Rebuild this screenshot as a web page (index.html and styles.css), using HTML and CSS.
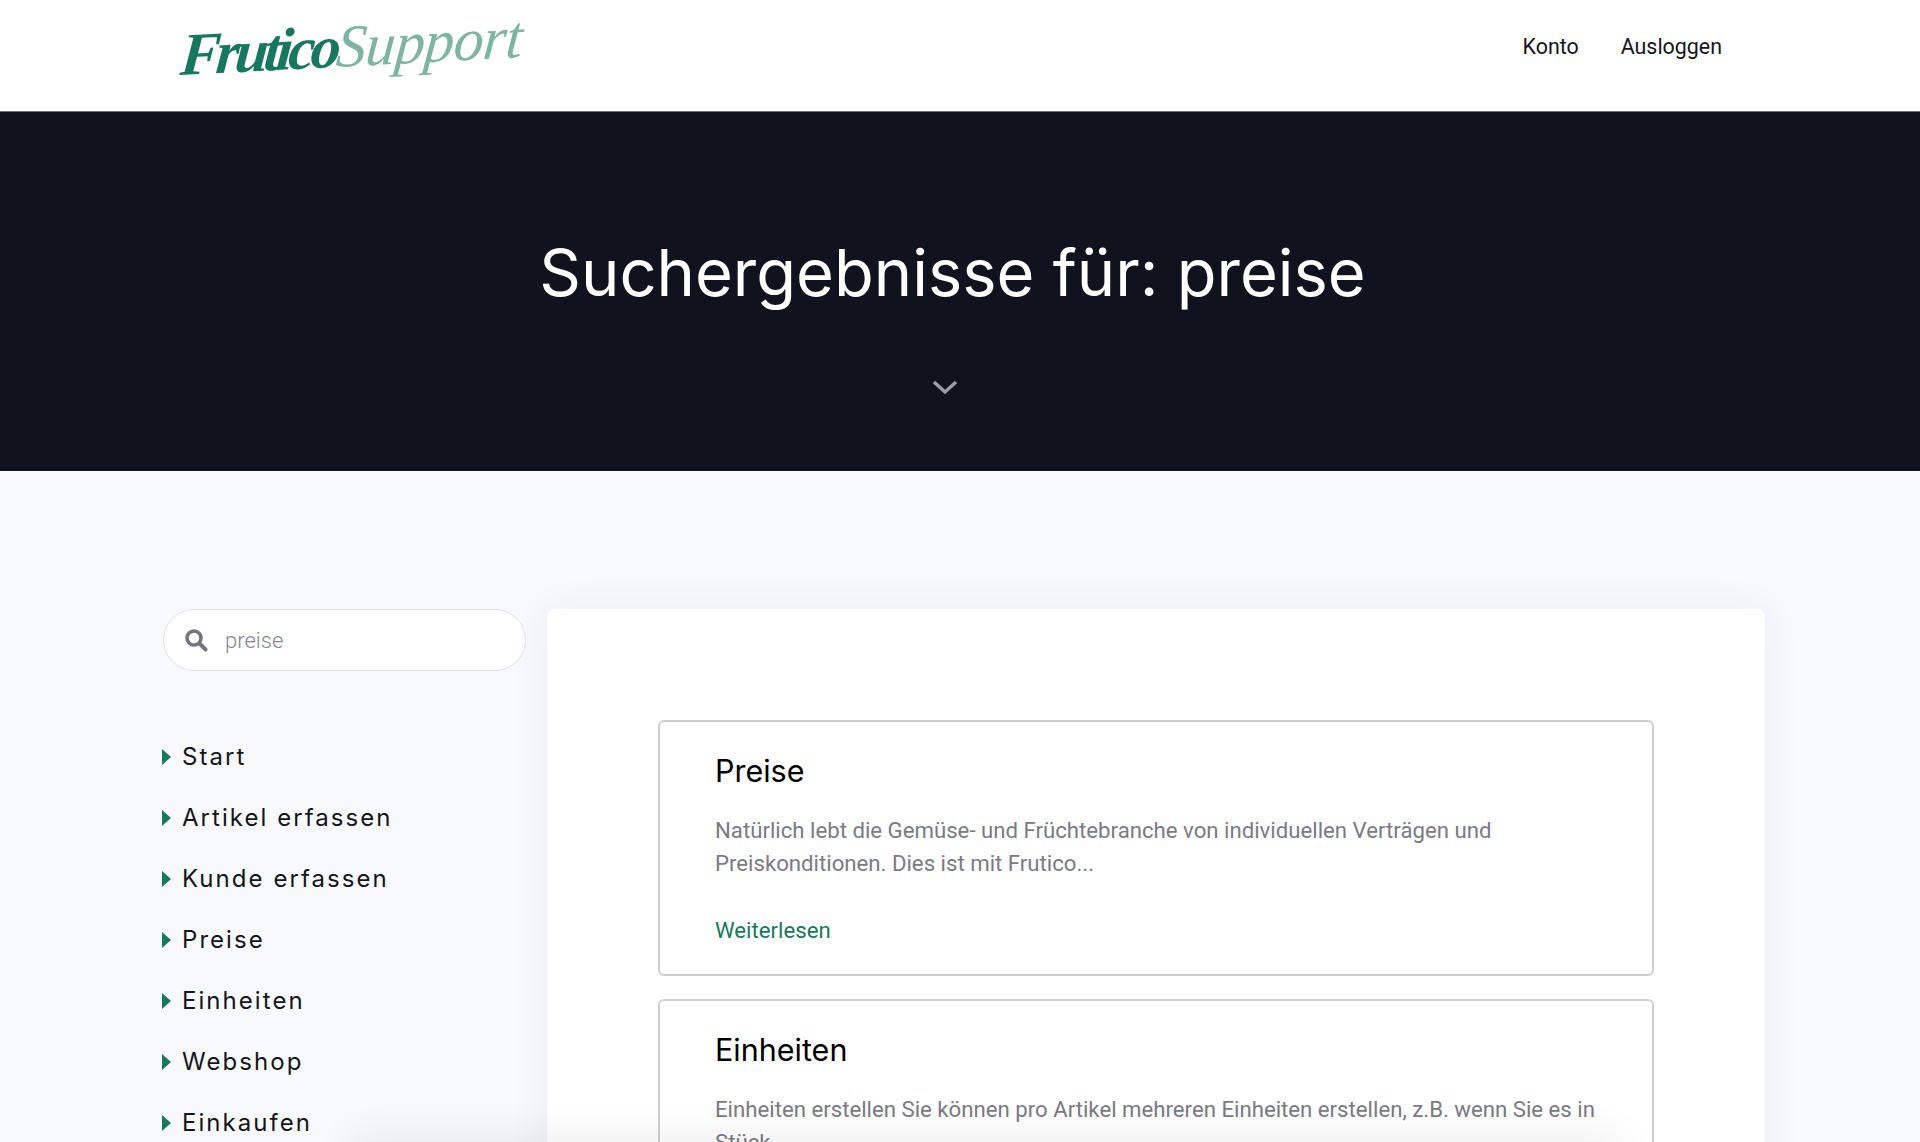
FILE: index.html
```html
<!DOCTYPE html>
<html lang="de">
<head>
    <meta charset="UTF-8">
    <meta name="viewport" content="width=device-width, initial-scale=1.0">
    <title>Frutico Support</title>
    <link rel="stylesheet" href="styles.css">
</head>
<body>

    <header class="topbar">
        <a class="logo" href="#"><span class="logo-dark">Frutico</span><span class="logo-light">Support</span></a>
        <nav class="topnav">
            <a href="#">Konto</a>
            <a href="#">Ausloggen</a>
        </nav>
    </header>

    <section class="hero">
        <h1>Suchergebnisse für: preise</h1>
        <svg class="hero-arrow" width="26" height="16" viewBox="0 0 26 16">
            <path d="M2 3l11 10L24 3" fill="none" stroke="#9a9ca2" stroke-width="3.4"/>
        </svg>
    </section>

    <main class="content">
        <aside class="sidebar">
            <div class="search">
                <svg class="search-icon" width="24" height="24" viewBox="0 0 24 24">
                    <circle cx="10" cy="10" r="7" fill="none" stroke="#75757f" stroke-width="3.6"/>
                    <path d="M15.5 15.5l6 6" stroke="#75757f" stroke-width="4" stroke-linecap="round"/>
                </svg>
                <span class="search-text">preise</span>
            </div>
            <ul class="sidemenu">
                <li><a href="#">Start</a></li>
                <li><a href="#">Artikel erfassen</a></li>
                <li><a href="#">Kunde erfassen</a></li>
                <li><a href="#">Preise</a></li>
                <li><a href="#">Einheiten</a></li>
                <li><a href="#">Webshop</a></li>
                <li><a href="#">Einkaufen</a></li>
            </ul>
        </aside>

        <div class="results">
            <article class="result">
                <h2>Preise</h2>
                <p>Natürlich lebt die Gemüse- und Früchtebranche von individuellen Verträgen und<br>Preiskonditionen. Dies ist mit Frutico...</p>
                <a href="#">Weiterlesen</a>
            </article>
            <article class="result">
                <h2>Einheiten</h2>
                <p>Einheiten erstellen Sie können pro Artikel mehreren Einheiten erstellen, z.B. wenn Sie es in<br>Stück...</p>
                <a href="#">Weiterlesen</a>
            </article>
        </div>
    </main>

    <div class="bottom-fade"></div>

</body>
</html>
```

FILE: styles.css
```css
html, body {
    height: 1142px;
    overflow: hidden;
}

body {
    background-color: #f8f9fd;
    font-family: 'Roboto', sans-serif;
    margin: 0;
}

a {
    text-decoration: none;
}

.topbar {
    display: flex;
    justify-content: space-between;
    background-color: #fff;
    height: 111px;
    border-bottom: 1px solid #6f7075;
    padding: 0 198px 0 181px;
}

.logo {
    display: block;
    height: 111px;
    font-family: 'Liberation Serif', serif;
    font-style: italic;
    font-size: 60px;
    line-height: 110px;
    white-space: nowrap;
    transform: rotate(-3deg) skewX(-8deg);
    transform-origin: left center;
}

.logo-dark {
    color: #17775f;
    font-weight: bold;
    letter-spacing: -4.4px;
}

.logo-light {
    color: #7fb4a2;
    letter-spacing: -0.6px;
}

.topnav {
    display: flex;
    gap: 42px;
    font-size: 21.4px;
    line-height: 93px;
}

.topnav a {
    color: #14151c;
}

.hero {
    display: flex;
    flex-direction: column;
    align-items: center;
    background-color: #10131e;
    height: 359px;
    padding-right: 15px;
}

.hero h1 {
    font-family: 'Inter', sans-serif;
    font-weight: 400;
    font-size: 65px;
    line-height: 80px;
    color: #fff;
    margin: 121px 0 0;
}

.hero-arrow {
    margin: 66px 16px 0 0;
}

.content {
    display: flex;
    gap: 21px;
    padding: 138px 155px 0 163px;
}

.sidebar {
    width: 363px;
    flex-shrink: 0;
}

.search {
    display: flex;
    align-items: center;
    gap: 17px;
    height: 60px;
    padding: 0 20px;
    background-color: #fff;
    border: 1.5px solid #e2e2e4;
    border-radius: 31px;
}

.search-text {
    font-size: 22px;
    font-weight: 300;
    color: #85858f;
}

.sidemenu {
    list-style: none;
    margin: 55px 0 0;
    padding: 0;
}

.sidemenu li {
    height: 61px;
    line-height: 61px;
    font-family: 'Inter', sans-serif;
    font-size: 24px;
    letter-spacing: 2.05px;
}

.sidemenu a {
    display: flex;
    align-items: center;
    color: #14151c;
}

.sidemenu a::before {
    content: "";
    border-left: 9px solid #17775f;
    border-top: 8px solid transparent;
    border-bottom: 8px solid transparent;
    margin: 1px 11px 0 -1px;
}

.results {
    flex: 1;
    background-color: #fff;
    border-radius: 8px;
    box-shadow: 0 0 40px rgba(40, 50, 90, 0.06);
    padding: 111px 111px 0;
    height: 600px;
}

.result {
    background-color: #fff;
    border: 2px solid #cfcfd1;
    border-radius: 6px;
    padding: 31px 55px 31px;
    margin-bottom: 23px;
}

.result h2 {
    font-family: 'Inter', sans-serif;
    font-weight: 400;
    font-size: 30.5px;
    line-height: 36px;
    color: #000;
    margin: 0 0 25px;
}

.result p {
    font-size: 22.2px;
    line-height: 33px;
    color: #7a7a85;
    margin: 0 0 37px;
}

.result a {
    font-size: 22.2px;
    color: #17775f;
}

/* faint fade across the bottom of the window */
.bottom-fade {
    position: fixed;
    left: 350px;
    right: 300px;
    bottom: -20px;
    height: 20px;
    box-shadow: 0 0 40px rgba(0, 0, 0, 0.12);
}
```
